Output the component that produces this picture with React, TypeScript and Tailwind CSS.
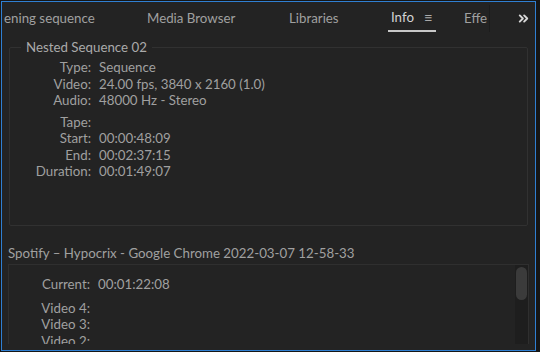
import { ChevronsRight } from 'lucide-react';

const tabs = [
  { label: 'ening sequence', w: 'w-[145px]' },
  { label: 'Media Browser', w: 'w-[142px]' },
  { label: 'Libraries', w: 'w-[99px]' },
];

const clipInfo = [
  { k: 'Type:', v: 'Sequence' },
  { k: 'Video:', v: '24.00 fps, 3840 x 2160 (1.0)' },
  { k: 'Audio:', v: '48000 Hz - Stereo' },
];

const timeInfo = [
  { k: 'Start:', v: '00:00:48:09' },
  { k: 'End:', v: '00:02:37:15' },
  { k: 'Duration:', v: '00:01:49:07' },
];

const Row = ({ k, v }: { k: string; v: string }) => (
  <div className="flex h-[16.5px] items-center">
    <span className="w-[81px] shrink-0 text-right">{k}</span>
    <span className="pl-[8px] whitespace-nowrap">{v}</span>
  </div>
);

export default function App() {
  return (
    <div
      className="w-[540px] h-[352px] bg-[#161616] pl-[1px] pt-[1px] overflow-hidden text-[13.3px] text-[#a0a0a0]"
      style={{ fontFamily: 'Lato, "Liberation Sans", sans-serif' }}
    >
      <div className="w-[535px] h-[350px] border border-[#2f7fd2] bg-[#232323] flex flex-col overflow-hidden">
        {/* Tab bar */}
        <div className="h-[30px] shrink-0 flex items-stretch pt-[3px]">
          {tabs.map((t) => (
            <div key={t.label} className={`${t.w} flex items-center whitespace-nowrap overflow-hidden`}>
              <span className={t.label === 'ening sequence' ? 'pl-[2px]' : 'pl-0'}>{t.label}</span>
            </div>
          ))}
          <div className="w-[76px] flex items-center">
            <div className="h-full flex items-center gap-[10px] border-b-2 border-[#c8c8c8] px-[3px] text-[#d4d4d4]">
              <span>Info</span>
              <span className="text-[#aaaaaa] text-[15px] leading-none">≡</span>
            </div>
          </div>
          <div className="w-[26px] flex items-center overflow-hidden border-r border-[#1c1c1c]">
            <span className="whitespace-nowrap">Effe</span>
          </div>
          <div className="flex-1 flex items-center justify-end pr-[4px]">
            <ChevronsRight size={15} strokeWidth={3} className="text-[#d8d8d8]" />
          </div>
        </div>

        {/* Clip info group */}
        <div className="mt-[15px] mx-[7px] h-[179px] shrink-0 border border-[#313131] rounded-[2px] relative">
          <div className="absolute -top-[9px] left-[11px] bg-[#232323] px-[5px] leading-[16px] text-[#aaaaaa]">
            Nested Sequence 02
          </div>
          <div className="pt-[12px]">
            {clipInfo.map((r) => (
              <Row key={r.k} {...r} />
            ))}
            <div className="mt-[5px]">
              <Row k="Tape:" v="" />
              {timeInfo.map((r) => (
                <Row key={r.k} {...r} />
              ))}
            </div>
          </div>
        </div>

        {/* Source title */}
        <div className="h-[38px] shrink-0 flex items-end pb-[0px] pl-[6px] whitespace-nowrap">
          Spotify – Hypocrix - Google Chrome 2022-03-07 12-58-33
        </div>

        {/* Current info box */}
        <div className="mx-[6px] h-[80px] border-t border-l border-r border-[#2f2f2f] flex overflow-hidden">
          <div className="flex-1 pt-[12px] overflow-hidden">
            <Row k="Current:" v="00:01:22:08" />
            <div className="mt-[7px]">
              <Row k="Video 4:" v="" />
              <Row k="Video 3:" v="" />
              <Row k="Video 2:" v="" />
            </div>
          </div>
          <div className="w-[13px] bg-[#1e1e1e] pt-[2px] px-[1px]">
            <div className="h-[33px] rounded-full bg-[#3b3b3b]" />
          </div>
        </div>
      </div>
    </div>
  );
}
